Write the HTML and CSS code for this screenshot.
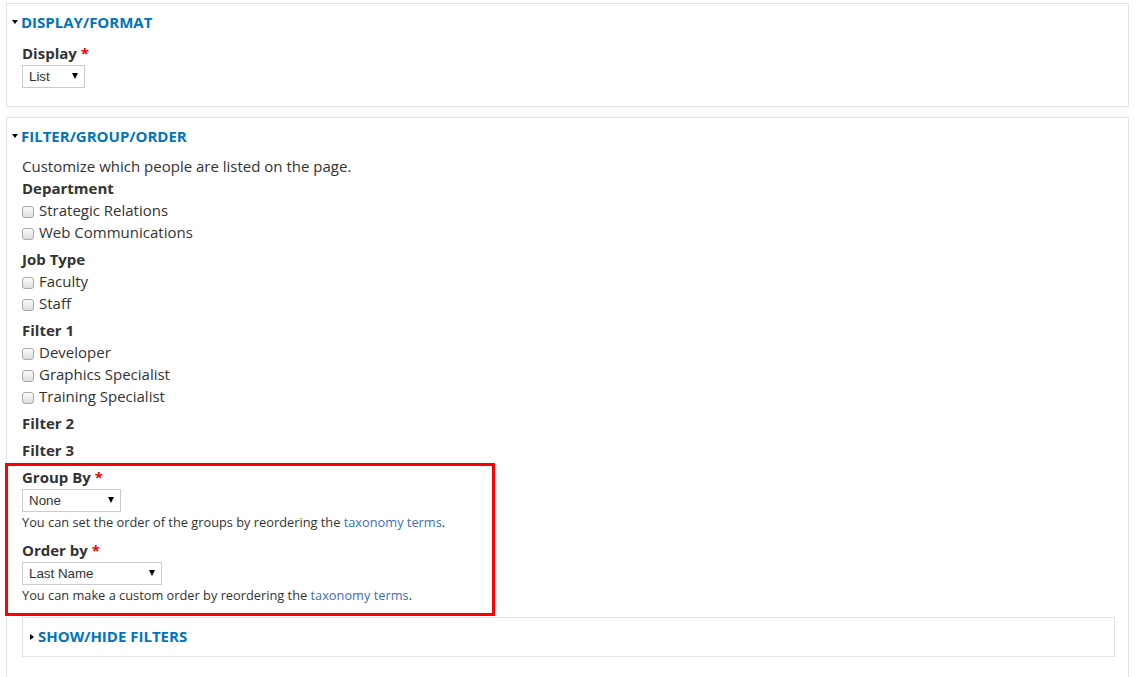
FILE: index.html
```html
<!DOCTYPE html>
<html lang="en">
<head>
<meta charset="utf-8">
<title>Settings</title>
<link rel="stylesheet" href="styles.css">
</head>
<body>
<div class="page">
  <section class="fieldset fs-display">
    <h2 class="legend"><span class="tri-down"></span>DISPLAY/FORMAT</h2>
    <div class="item item-only">
      <div class="label">Display <span class="req">*</span></div>
      <div class="select w-display"><span>List</span><span class="caret"></span></div>
    </div>
  </section>

  <section class="fieldset fs-filter">
    <h2 class="legend"><span class="tri-down"></span>FILTER/GROUP/ORDER</h2>
    <p class="intro">Customize which people are listed on the page.</p>

    <div class="item">
      <div class="label">Department</div>
      <div class="check"><span class="box"></span>Strategic Relations</div>
      <div class="check"><span class="box"></span>Web Communications</div>
    </div>

    <div class="item">
      <div class="label">Job Type</div>
      <div class="check"><span class="box"></span>Faculty</div>
      <div class="check"><span class="box"></span>Staff</div>
    </div>

    <div class="item">
      <div class="label">Filter 1</div>
      <div class="check"><span class="box"></span>Developer</div>
      <div class="check"><span class="box"></span>Graphics Specialist</div>
      <div class="check"><span class="box"></span>Training Specialist</div>
    </div>

    <div class="item">
      <div class="label">Filter 2</div>
    </div>

    <div class="item">
      <div class="label">Filter 3</div>
    </div>

    <div class="highlight">
      <div class="item item-select">
        <div class="label">Group By <span class="req">*</span></div>
        <div class="select w-group"><span>None</span><span class="caret"></span></div>
        <div class="desc">You can set the order of the groups by reordering the <a href="#">taxonomy terms</a>.</div>
      </div>
      <div class="item item-select last">
        <div class="label">Order by <span class="req">*</span></div>
        <div class="select w-order"><span>Last Name</span><span class="caret"></span></div>
        <div class="desc">You can make a custom order by reordering the <a href="#">taxonomy terms</a>.</div>
      </div>
    </div>

    <section class="fieldset fs-inner">
      <h2 class="legend"><span class="tri-right"></span>SHOW/HIDE FILTERS</h2>
    </section>
  </section>
</div>
</body>
</html>
```

FILE: styles.css
```css
* {
  box-sizing: border-box;
}

html, body {
  margin: 0;
  padding: 0;
  background: #ffffff;
}

body {
  font-family: "Open Sans", "Noto Sans", sans-serif;
  font-size: 15px;
  line-height: 22px;
  color: #333333;
  overflow: hidden;
}

.page {
  padding: 3px 0 0 6px;
}

.fieldset {
  border: 1px solid #e3e3e3;
  width: 1123px;
  padding: 7px 13px 18px 15px;
}

.fs-filter {
  margin-top: 10px;
  padding-bottom: 40px;
}

.legend {
  margin: 0 0 9px -10px;
  font-size: 15px;
  line-height: 22px;
  font-weight: 700;
  color: #0074bd;
  display: flex;
  align-items: center;
}

.fs-filter > .legend {
  margin-bottom: 8px;
}

.tri-down {
  width: 0;
  height: 0;
  border-left: 3.5px solid transparent;
  border-right: 3.5px solid transparent;
  border-top: 4px solid #000000;
  margin-right: 3px;
}

.tri-right {
  width: 0;
  height: 0;
  border-top: 3.5px solid transparent;
  border-bottom: 3.5px solid transparent;
  border-left: 4px solid #000000;
  margin-right: 4px;
  margin-top: 1px;
}

.intro {
  margin: 0;
}

.item {
  margin-bottom: 5px;
}

.item-only {
  margin-bottom: 0;
}

.label {
  font-weight: 700;
  color: #333333;
}

.req {
  color: #ee0000;
}

.check {
  display: flex;
  align-items: center;
}

.box {
  width: 12px;
  height: 12px;
  border: 1px solid #a8a8a8;
  border-radius: 3px;
  background: linear-gradient(#fbfbfb, #dedede);
  margin: 3px 5px 0 0;
}

.select {
  margin-top: 1px;
  height: 23px;
  border: 1px solid #cccccc;
  background: #ffffff;
  display: flex;
  align-items: center;
  justify-content: space-between;
  padding: 0 6px;
  font-family: "Liberation Sans", Arial, sans-serif;
  font-size: 13.333px;
  line-height: 16px;
  color: #333333;
}

.caret {
  width: 0;
  height: 0;
  border-left: 3px solid transparent;
  border-right: 3px solid transparent;
  border-top: 6px solid #000000;
  margin-top: -1px;
}

.w-display {
  width: 63px;
}

.w-group {
  width: 99px;
}

.w-order {
  width: 140px;
}

.desc {
  font-size: 12.8px;
  line-height: 20px;
  color: #333333;
}

.desc a {
  color: #3d6fb4;
  text-decoration: none;
}

.item-select {
  margin-bottom: 7px;
}

.item-select.last {
  margin-bottom: 0;
}

.highlight {
  margin: -3px 0 0 -17px;
  width: 490px;
  border: 3px solid #ff0000;
  padding: 0 0 8px 14px;
}

.fs-inner {
  margin-top: 1px;
  width: 1093px;
  padding: 7px 10px 9px 7px;
}

.fs-inner .legend {
  margin: 0;
}
```
